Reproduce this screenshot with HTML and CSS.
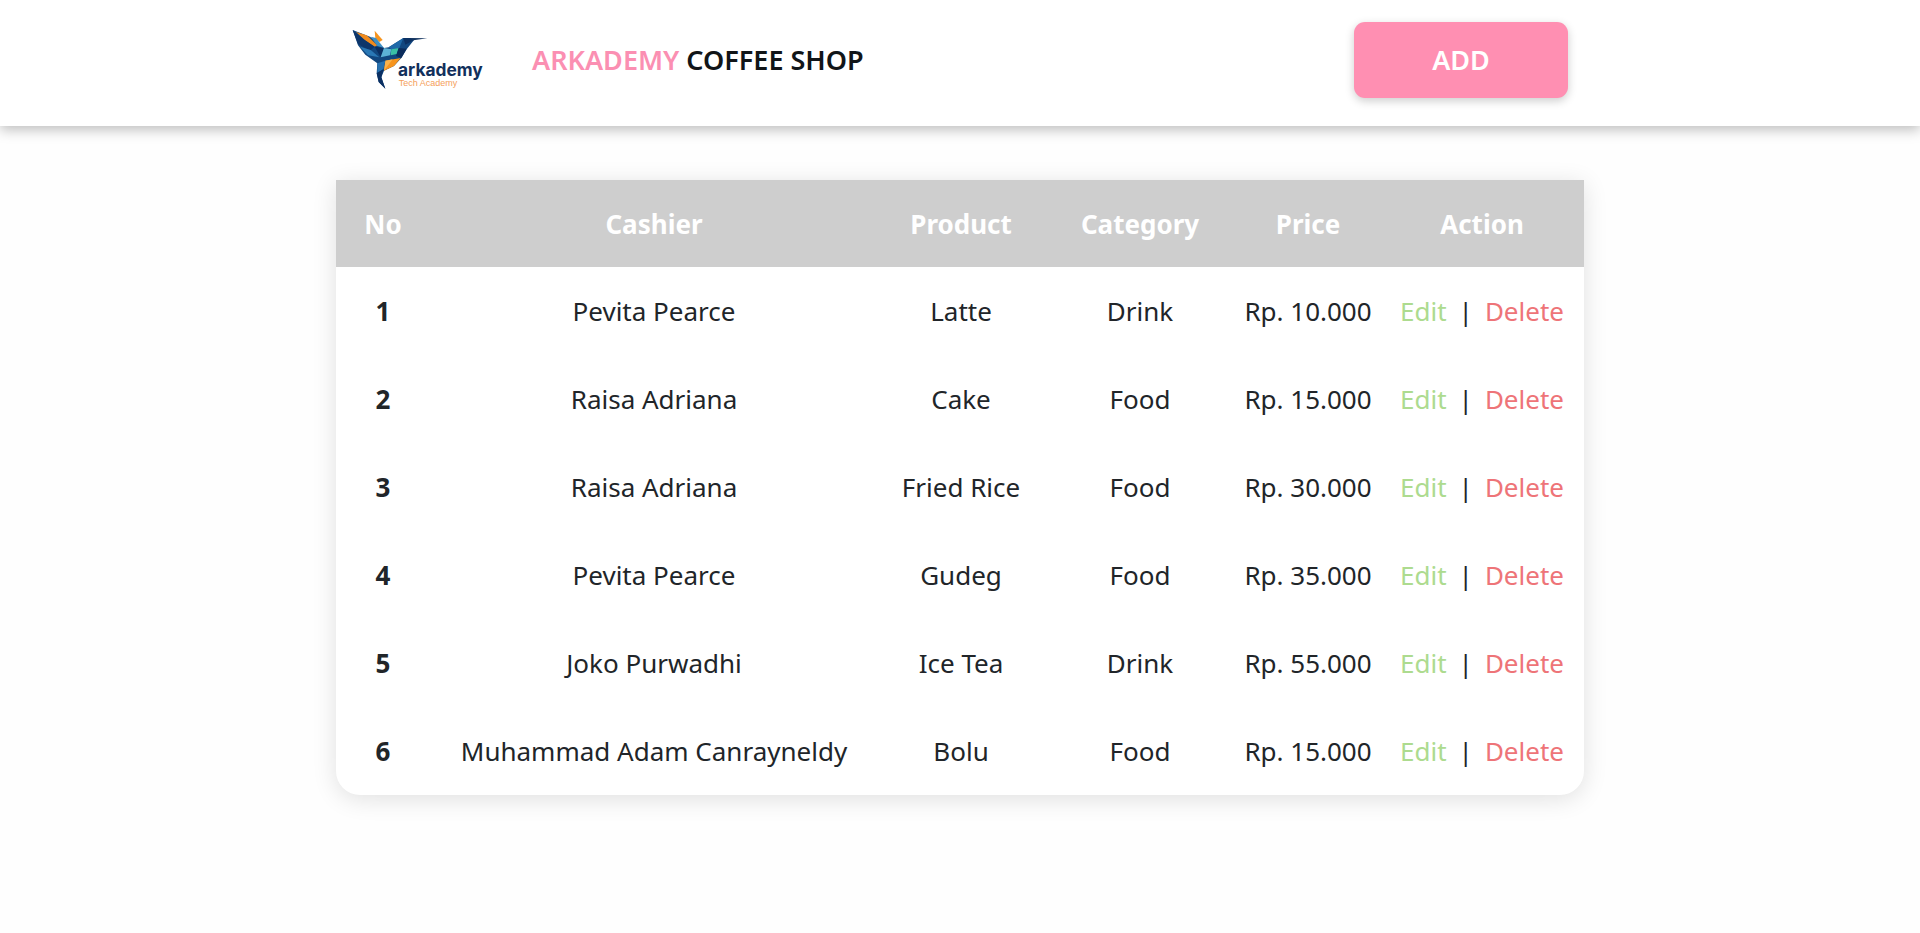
FILE: index.html
```html
<!DOCTYPE html>
<html lang="en">
<head>
<meta charset="utf-8">
<title>Arkademy Coffee Shop</title>
<link rel="stylesheet" href="styles.css">
</head>
<body>
<header class="navbar">
  <div class="navbar-inner">
    <svg class="logo" viewBox="0 0 480 240" role="img" aria-label="Arkademy Tech Academy">
      <path fill="#12477f" d="M38 30 L90 50 L132 84 L146 82 L190 54 L212 54 L222 60 L200 88 L184 114 L162 138 L132 152 L124 172 L136 206 L116 186 L110 160 L112 130 L76 104 L54 76 Z"/>
      <polygon fill="#f08a1d" points="48,36 80,46 112,76 104,80 74,60"/>
      <polygon fill="#0d356a" points="38,30 74,60 104,80 90,92 54,72"/>
      <polygon fill="#2a78b5" points="60,80 92,90 118,112 84,106"/>
      <polygon fill="#f7941d" points="104,32 128,60 118,66 106,54"/>
      <polygon fill="#3f8fc4" points="92,50 108,54 132,84 112,78"/>
      <polygon fill="#0b2f62" points="104,80 132,84 122,112"/>
      <polygon fill="#5db2d6" points="132,84 154,88 150,106 122,112"/>
      <polygon fill="#1f69a8" points="146,82 190,54 178,84 154,88"/>
      <polygon fill="#0c3163" points="190,54 212,54 222,60 196,74"/>
      <polygon fill="#12335f" points="210,54 262,55 220,61"/>
      <polygon fill="#3bbfa5" points="154,88 176,84 170,102 152,106"/>
      <polygon fill="#0b2c5c" points="176,84 200,86 184,114 168,108"/>
      <polygon fill="#f7941d" points="136,122 182,114 162,138 132,152"/>
      <polygon fill="#fbb24b" points="136,122 158,118 132,152"/>
      <polygon fill="#2872b0" points="112,130 136,122 130,148 112,158"/>
      <polygon fill="#0b2f62" points="110,160 130,148 124,172 136,206 116,186"/>
      <text class="logo-name" x="174" y="168">arkademy</text>
      <text class="logo-tag" x="176" y="197">Tech Academy</text>
    </svg>
    <h1 class="brand"><span class="brand-accent">ARKADEMY</span> COFFEE SHOP</h1>
    <button class="add-button" type="button">ADD</button>
  </div>
</header>
<main class="content">
  <table class="orders">
    <colgroup>
      <col class="col-no"><col><col class="col-product"><col class="col-category"><col class="col-price"><col class="col-action">
    </colgroup>
    <thead>
      <tr><th scope="col">No</th><th scope="col">Cashier</th><th scope="col">Product</th><th scope="col">Category</th><th scope="col">Price</th><th scope="col">Action</th></tr>
    </thead>
    <tbody>
      <tr><th scope="row">1</th><td>Pevita Pearce</td><td>Latte</td><td>Drink</td><td>Rp. 10.000</td><td><div class="actions"><a class="edit" href="#">Edit</a><span>|</span><a class="delete" href="#">Delete</a></div></td></tr>
      <tr><th scope="row">2</th><td>Raisa Adriana</td><td>Cake</td><td>Food</td><td>Rp. 15.000</td><td><div class="actions"><a class="edit" href="#">Edit</a><span>|</span><a class="delete" href="#">Delete</a></div></td></tr>
      <tr><th scope="row">3</th><td>Raisa Adriana</td><td>Fried Rice</td><td>Food</td><td>Rp. 30.000</td><td><div class="actions"><a class="edit" href="#">Edit</a><span>|</span><a class="delete" href="#">Delete</a></div></td></tr>
      <tr><th scope="row">4</th><td>Pevita Pearce</td><td>Gudeg</td><td>Food</td><td>Rp. 35.000</td><td><div class="actions"><a class="edit" href="#">Edit</a><span>|</span><a class="delete" href="#">Delete</a></div></td></tr>
      <tr><th scope="row">5</th><td>Joko Purwadhi</td><td>Ice Tea</td><td>Drink</td><td>Rp. 55.000</td><td><div class="actions"><a class="edit" href="#">Edit</a><span>|</span><a class="delete" href="#">Delete</a></div></td></tr>
      <tr><th scope="row">6</th><td>Muhammad Adam Canrayneldy</td><td>Bolu</td><td>Food</td><td>Rp. 15.000</td><td><div class="actions"><a class="edit" href="#">Edit</a><span>|</span><a class="delete" href="#">Delete</a></div></td></tr>
    </tbody>
  </table>
</main>
</body>
</html>
```
FILE: styles.css
```css
* {
  box-sizing: border-box;
}

body {
  margin: 0;
  background: #fefefe;
  color: #212529;
  font-family: "Segoe UI", "Noto Sans", "Open Sans", sans-serif;
  font-size: 26px;
  line-height: 40px;
}

.navbar {
  background: #fff;
  box-shadow: 0 4px 12px rgba(0, 0, 0, 0.25);
}

.navbar-inner {
  display: flex;
  align-items: center;
  max-width: 1248px;
  margin: 0 auto;
  padding: 20px 16px 26px 4px;
}

.logo {
  width: 160px;
  height: 80px;
  flex: none;
}

.logo-name {
  fill: #12305c;
  font-family: Inter, sans-serif;
  font-size: 52px;
  font-weight: 700;
}

.logo-tag {
  fill: #f5a05a;
  font-family: "Liberation Sans", sans-serif;
  font-size: 27px;
}

.brand {
  margin: 0 auto 0 32px;
  color: #111518;
  font-size: 27px;
  font-weight: 600;
}

.brand-accent {
  color: #fb8fb2;
}

.add-button {
  width: 214px;
  height: 76px;
  border: 0;
  border-radius: 11px;
  background: #ff8fb2;
  box-shadow: 0 3px 10px rgba(0, 0, 0, 0.2);
  color: #fff;
  font: inherit;
  font-size: 27px;
  font-weight: 600;
  cursor: pointer;
}

.content {
  max-width: 1248px;
  margin: 54px auto;
}

.orders {
  width: 100%;
  table-layout: fixed;
  border-collapse: collapse;
  border-radius: 0 0 24px 24px;
  background: #fff;
  box-shadow: 0 4px 24px rgba(0, 0, 0, 0.12);
  text-align: center;
}

.col-no { width: 94px; }
.col-product { width: 166px; }
.col-category { width: 192px; }
.col-price { width: 144px; }
.col-action { width: 204px; }

.orders th,
.orders td {
  height: 88px;
  padding: 0;
  white-space: nowrap;
}

.orders thead th {
  height: 87px;
  background: #cecece;
  color: #fff;
}

.actions {
  display: flex;
  justify-content: center;
  gap: 12px;
}

.actions a {
  text-decoration: none;
}

.edit {
  color: #addb8f;
}

.delete {
  color: #ee7478;
}
```
